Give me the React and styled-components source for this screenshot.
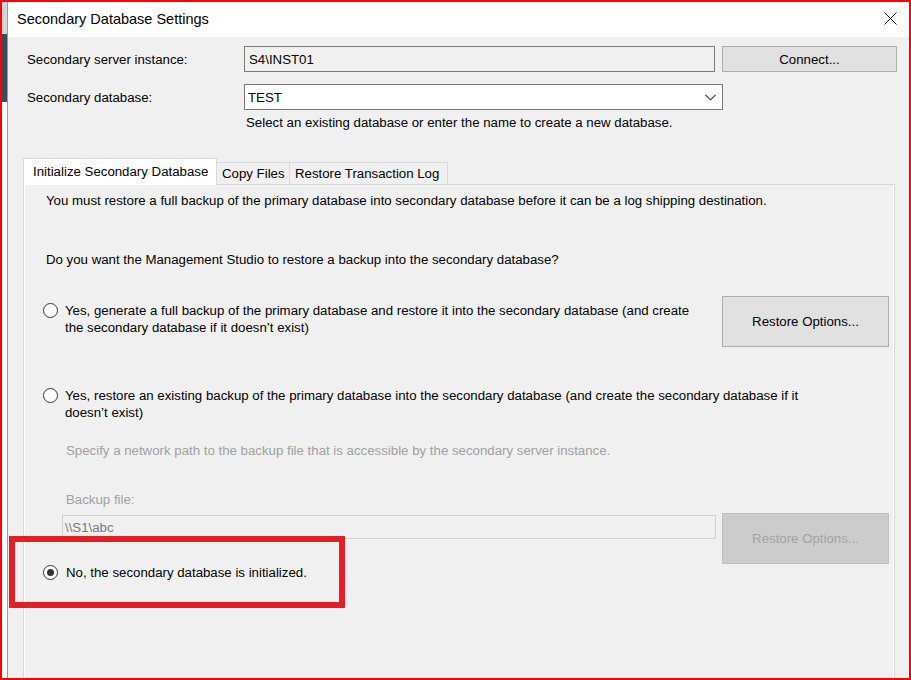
import React from "react";
import styled, { createGlobalStyle } from "styled-components";

const GlobalStyle = createGlobalStyle`
  html, body {
    margin: 0;
    padding: 0;
    background: #ffffff;
  }
  body {
    font-family: "Liberation Sans", Arial, sans-serif;
    font-size: 13.25px;
    color: #000000;
  }
  * {
    box-sizing: border-box;
  }
`;

const Frame = styled.div`
  position: relative;
  width: 911px;
  height: 680px;
  border: 2px solid #ff0000;
  display: flex;
  overflow: hidden;
`;

const BehindStrip = styled.div`
  width: 5px;
  flex: none;
  display: flex;
  flex-direction: column;
`;

const StripPart = styled.div`
  height: ${(p) => (p.h ? `${p.h}px` : "auto")};
  flex: ${(p) => (p.h ? "none" : 1)};
  background: ${(p) => p.color};
`;

const Window = styled.div`
  flex: 1;
  min-width: 0;
  display: flex;
  flex-direction: column;
  border-left: 1px solid #9c9c9c;
  background: #f0f0f0;
`;

const TitleBar = styled.div`
  height: 35px;
  flex: none;
  display: flex;
  align-items: center;
  justify-content: space-between;
  padding: 0 12px 2px 9px;
  background: #ffffff;
`;

const Title = styled.div`
  font-size: 14.5px;
`;

const Body = styled.div`
  flex: 1;
  min-height: 0;
  display: flex;
  flex-direction: column;
  padding: 9px 14px 0 15px;
`;

const FieldRow = styled.div`
  display: flex;
  align-items: center;
  padding-left: 4px;
  margin-right: -2px;
  margin-top: ${(p) => p.mt || 0}px;
`;

const FieldLabel = styled.div`
  width: 217px;
  flex: none;
`;

const TextBox = styled.div`
  width: ${(p) => p.w}px;
  height: ${(p) => p.h || 26}px;
  flex: none;
  display: flex;
  align-items: center;
  justify-content: space-between;
  padding: 0 6px 0 ${(p) => p.pl || 4}px;
  border: 1px solid ${(p) => (p.disabled ? "#d2d2d2" : "#7a7a7a")};
  background: ${(p) => (p.white ? "#ffffff" : "#f0f0f0")};
  color: ${(p) => (p.disabled ? "#7a7a7a" : "#000000")};
`;

const Button = styled.div`
  width: ${(p) => p.w}px;
  height: ${(p) => p.h}px;
  flex: none;
  margin-left: ${(p) => p.ml || 0}px;
  display: flex;
  align-items: center;
  justify-content: center;
  border: 1px solid ${(p) => (p.disabled ? "#bfbfbf" : "#adadad")};
  background: ${(p) => (p.disabled ? "#cccccc" : "#e1e1e1")};
  color: ${(p) => (p.disabled ? "#a3a3a3" : "#000000")};
`;

const Hint = styled.div`
  margin-top: 5px;
  padding-left: 223px;
  line-height: 16px;
`;

const TabStrip = styled.div`
  margin-top: 27px;
  display: flex;
  align-items: flex-end;
  height: 26px;
  flex: none;
`;

const Tab = styled.div`
  position: relative;
  z-index: ${(p) => (p.active ? 1 : 0)};
  width: ${(p) => p.w}px;
  height: ${(p) => (p.active ? 27 : 22)}px;
  margin-bottom: ${(p) => (p.active ? -1 : 0)}px;
  padding: 0 ${(p) => (p.active ? 9 : 5)}px ${(p) => (p.active ? 1 : 0)}px;
  display: flex;
  align-items: center;
  border: 1px solid #d9d9d9;
  border-bottom: none;
  border-left: ${(p) => (p.first || p.active ? "1px solid #d9d9d9" : "none")};
  background: ${(p) => (p.active ? "#ffffff" : "#f0f0f0")};
  white-space: nowrap;
`;

const Panel = styled.div`
  flex: 1;
  display: flex;
  flex-direction: column;
  padding: 8px 5px 0 19px;
  border: 1px solid #d9d9d9;
  border-bottom: none;
  box-shadow: inset 1px 0 0 #ffffff, inset -1px 0 0 #ffffff;
`;

const Para = styled.div`
  margin-top: ${(p) => p.mt || 0}px;
  padding-left: ${(p) => p.pl || 3}px;
  line-height: 16px;
  color: ${(p) => (p.muted ? "#a0a0a0" : "#000000")};
`;

const OptionRow = styled.div`
  margin-top: ${(p) => p.mt || 0}px;
  display: flex;
  align-items: flex-start;
  justify-content: space-between;
`;

const Radio = styled.div`
  display: flex;
  align-items: flex-start;
  padding-top: ${(p) => p.pt || 0}px;
  line-height: 17px;
`;

const RadioCircle = styled.div`
  width: 15px;
  height: 15px;
  flex: none;
  margin: 1px 7px 0 0;
  border-radius: 50%;
  border: 1px solid #333333;
  background: #ffffff;
  display: flex;
  align-items: center;
  justify-content: center;

  &::after {
    content: "";
    display: ${(p) => (p.checked ? "block" : "none")};
    width: 7px;
    height: 7px;
    border-radius: 50%;
    background: #333333;
  }
`;

const RadioText = styled.div`
  display: flex;
  flex-direction: column;
  padding-left: ${(p) => p.pl || 0}px;
`;

const BackupRow = styled.div`
  margin-top: 5px;
  display: flex;
  align-items: flex-start;
  padding-left: 19px;
`;

const Annotation = styled.div`
  position: absolute;
  left: 7px;
  top: 534px;
  width: 336px;
  height: 72px;
  border: 6px solid #e41e26;
  pointer-events: none;
`;

const CloseIcon = () => (
  <svg width="13" height="13" viewBox="0 0 13 13">
    <path d="M0.5 0.5 L12.5 12.5 M12.5 0.5 L0.5 12.5" stroke="#111" strokeWidth="1" fill="none" />
  </svg>
);

const Chevron = () => (
  <svg width="11" height="7" viewBox="0 0 11 7">
    <polyline points="0.5,0.8 5.5,5.8 10.5,0.8" stroke="#333" strokeWidth="1.1" fill="none" />
  </svg>
);

export default function App() {
  return (
    <>
      <GlobalStyle />
      <Frame>
        <BehindStrip>
          <StripPart h={32} color="#d4d4d4" />
          <StripPart h={68} color="#3e4a5c" />
          <StripPart color="#ffffff" />
        </BehindStrip>
        <Window>
          <TitleBar>
            <Title>Secondary Database Settings</Title>
            <CloseIcon />
          </TitleBar>
          <Body>
            <FieldRow>
              <FieldLabel>Secondary server instance:</FieldLabel>
              <TextBox w={471}>S4\INST01</TextBox>
              <Button w={175} h={26} ml={7}>Connect...</Button>
            </FieldRow>
            <FieldRow mt={12}>
              <FieldLabel>Secondary database:</FieldLabel>
              <TextBox w={479} pl={3} white>
                <span>TEST</span>
                <Chevron />
              </TextBox>
            </FieldRow>
            <Hint>Select an existing database or enter the name to create a new database.</Hint>

            <TabStrip>
              <Tab active first w={194}>Initialize Secondary Database</Tab>
              <Tab w={73}>Copy Files</Tab>
              <Tab w={158}>Restore Transaction Log</Tab>
            </TabStrip>
            <Panel>
              <Para>
                You must restore a full backup of the primary database into secondary database before it can be a log shipping destination.
              </Para>
              <Para mt={43}>
                Do you want the Management Studio to restore a backup into the secondary database?
              </Para>

              <OptionRow mt={28}>
                <Radio pt={6}>
                  <RadioCircle />
                  <RadioText>
                    <span>Yes, generate a full backup of the primary database and restore it into the secondary database (and create</span>
                    <span>the secondary database if it doesn&#8217;t exist)</span>
                  </RadioText>
                </Radio>
                <Button w={167} h={51}>Restore Options...</Button>
              </OptionRow>

              <OptionRow mt={40}>
                <Radio>
                  <RadioCircle />
                  <RadioText>
                    <span>Yes, restore an existing backup of the primary database into the secondary database (and create the secondary database if it</span>
                    <span>doesn&#8217;t exist)</span>
                  </RadioText>
                </Radio>
              </OptionRow>

              <Para mt={22} pl={23} muted>
                Specify a network path to the backup file that is accessible by the secondary server instance.
              </Para>
              <Para mt={33} pl={23} muted>Backup file:</Para>
              <BackupRow>
                <TextBox w={654} h={24} pl={2} disabled style={{ marginTop: 2 }}>\\S1\abc</TextBox>
                <Button w={167} h={51} ml={6} disabled>Restore Options...</Button>
              </BackupRow>

              <OptionRow>
                <Radio>
                  <RadioCircle checked />
                  <RadioText pl={1}>
                    <span>No, the secondary database is initialized.</span>
                  </RadioText>
                </Radio>
              </OptionRow>
            </Panel>
          </Body>
        </Window>
        <Annotation />
      </Frame>
    </>
  );
}
